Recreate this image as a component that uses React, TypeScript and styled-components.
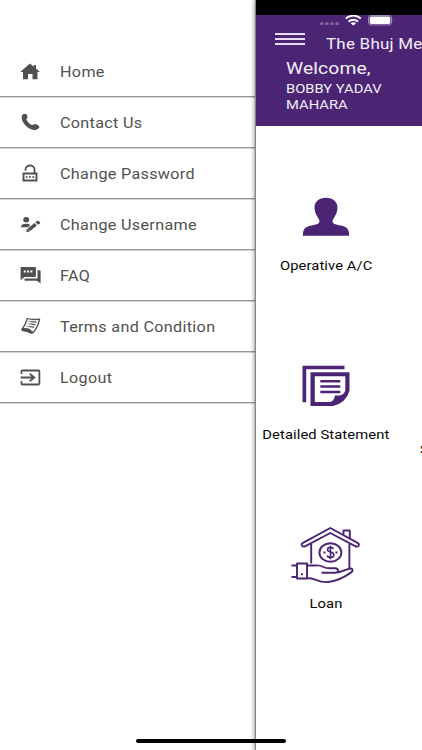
import React from 'react';
import styled, { createGlobalStyle } from 'styled-components';

const PURPLE = '#4b2574';
const GREY = '#505050';

const GlobalStyle = createGlobalStyle`
  * { box-sizing: border-box; }
  body { margin: 0; background: #fff; overflow: hidden; }
`;

const Screen = styled.div`
  position: relative;
  display: flex;
  width: 422px;
  height: 750px;
  overflow: hidden;
  background: #fff;
  font-family: Roboto, "Liberation Sans", sans-serif;
`;

const Drawer = styled.nav`
  flex: none;
  width: 256px;
  padding-top: 46px;
`;

const DrawerRow = styled.div`
  display: flex;
  align-items: center;
  height: 51px;
  padding-left: 18px;
  border-bottom: 1px solid #979797;
  box-shadow: 0 1px 0 #d2d2d2;
  color: ${GREY};
`;

const IconSlot = styled.div`
  display: flex;
  justify-content: center;
  width: 24px;
  margin-right: 17.5px;
  svg { display: block; }
`;

const RowLabel = styled.div`
  padding-top: 2px;
`;

const Wide = styled.span<{ $size: number; $stretch: number; $spacing?: number; $origin?: string }>`
  display: block;
  white-space: nowrap;
  font-size: ${p => p.$size}px;
  letter-spacing: ${p => p.$spacing ?? 0}px;
  transform: scaleX(${p => p.$stretch});
  transform-origin: ${p => p.$origin ?? 'left'} center;
`;

const Main = styled.main`
  flex: none;
  width: 166px;
  height: 750px;
  background: #fff;
  box-shadow: -1px 0 1px #888, -2px 0 4px rgba(0, 0, 0, 0.35);
`;

const Notch = styled.div`
  height: 15px;
  background: #000;
`;

const Header = styled.header`
  height: 111px;
  overflow: hidden;
  background: ${PURPLE};
  color: #f4effa;
`;

const StatusBar = styled.div`
  display: flex;
  height: 12px;
  padding-left: 63px;
`;

const TitleBar = styled.div`
  display: flex;
  height: 31px;
  padding-left: 19px;
`;

const Burger = styled.div`
  flex: none;
  display: flex;
  flex-direction: column;
  justify-content: space-between;
  width: 30px;
  height: 12px;
  margin: 6px 21px 0 0;
`;

const BurgerLine = styled.i`
  height: 2px;
  background: #eadcf6;
`;

const Title = styled.div`
  padding-top: 9px;
  line-height: 18px;
`;

const Greeting = styled.div`
  padding-left: 30px;
  line-height: 16px;
`;

const Welcome = styled.div`
  height: 23px;
  line-height: 22px;
`;

const TileRow = styled.div<{ $top: number }>`
  display: flex;
  height: 98px;
  margin-top: ${p => p.$top}px;
  overflow: hidden;
`;

const Tile = styled.div`
  flex: none;
  display: flex;
  flex-direction: column;
  align-items: center;
  width: 140.5px;
  color: #060606;
`;

const TileIcon = styled.div<{ $height?: number }>`
  height: ${p => p.$height ?? 61}px;
  svg { display: block; }
`;

const NextTile = styled.div`
  flex: none;
  padding: 79px 0 0 23.5px;
  line-height: 12px;
  color: #060606;
`;

const HomeIndicator = styled.div`
  position: absolute;
  left: 136px;
  bottom: 7px;
  width: 150px;
  height: 4px;
  border-radius: 2px;
  background: #000;
`;

const HomeIcon = () => (
  <svg width="20" height="17" viewBox="0 0 20 17" fill="currentColor">
    <path d="M10 .5 13.8 3.7V2H16v3.6L19.8 9h-2.3v7.3h-5V11H8v5.3H3V9H.2Z" />
  </svg>
);

const PhoneIcon = () => (
  <svg width="19" height="18" viewBox="0 0 19 18" fill="currentColor">
    <path d="M.7 3.4C1.2 1.7 2.7.5 4.3.8c1.4.4 2.3 1.8 2.2 3.2 0 1-.9 1.4-1 2 .4 2.5 3.3 5.4 6 6 .8.1 1.2-1 2.3-.9 1.6.1 3.4 1.3 4.5 2.5.3.4.1 1-.3 1.3-2 1.8-4.1 2.6-6.3 1.9C6.1 15.2.1 9 .7 3.4Z" />
  </svg>
);

const LockIcon = () => (
  <svg width="17" height="18" viewBox="0 0 17 18" fill="none" stroke="currentColor">
    <path d="M3.5 6.8V5.500a4.500 4 0 0 1 9 0V9" strokeWidth="1.8" />
    <path d="M1.500 9.500h13v7h-13Z" strokeWidth="1.9" />
    <path d="M3.700 13h8.600" strokeWidth="1.7" strokeDasharray="2 1.3" />
  </svg>
);

const UserEditIcon = () => (
  <svg width="21" height="17" viewBox="0 0 21 17" fill="currentColor">
    <ellipse cx="6.2" cy="3.7" rx="3" ry="2.7" />
    <path d="M.8 11.2C1 8.8 3 7.7 6 7.7c1.800 0 3.300.4 4.300 1.300l-2.200 2.200Z" />
    <path d="m7 13.2 7.400-6.200 2.500 2.500-7.400 6-3.200.8Z" />
    <path d="m15.400 6.200 1.500-1.200q.8-.6 1.500 0l1.600 1.300q.6.600 0 1.200l-1.900 1.300Z" />
    <path d="m8.500 14 1 .8" stroke="#fff" strokeWidth=".9" />
  </svg>
);

const FaqIcon = () => (
  <svg width="21" height="18" viewBox="0 0 21 18">
    <path fill="currentColor" d="M1.300 1h13.800q.8 0 .8.800v8.500q0 .7-.8.700H4.300L.6 14.300V1.700Q.6 1 1.300 1Z" />
    <path fill="currentColor" d="M17.500 4.200H20q.6 0 .6.700v12.600l-3.800-2.700H5.200q-.7 0-.7-.7v-1.600h13Z" />
    <path stroke="#fff" strokeWidth="1.9" strokeDasharray="2 1.3" d="M3.800 5.500h9" />
  </svg>
);

const TermsIcon = () => (
  <svg width="21" height="18" viewBox="0 0 21 18" fill="none" stroke="currentColor">
    <path d="M7.300 1.500q5 1.500 12.200.7-1.100 6.800-5.600 12.600-1.300 1.600-2.500.4-.9-2.400-3-2.700l-6-.8Q5.500 8 7.300 1.500Z" strokeWidth="1.3" />
    <path d="M2.200 11.500q-1.600 1.600.5 2.300 4.600.3 8 2.500 1.700.4 2.800-1.300l-2-.4q-.9-2.200-3-2.600Z" fill="currentColor" strokeWidth=".9" />
    <path d="m10.500 4.600 6 .5M9.500 7l6 .6M8.400 9.500l5.800.7" strokeWidth="1.2" />
    <path d="M8.600 4.400h1M7.700 6.700h1M6.500 9.200h1" strokeWidth="1.1" />
  </svg>
);

const LogoutIcon = () => (
  <svg width="21" height="17" viewBox="0 0 21 17" fill="none" stroke="currentColor" strokeWidth="1.8">
    <path d="M1.500 5V2.300Q1.500 1.500 2.400 1.500h16q1 0 1 .9v12.200q0 .9-1 .9h-16q-.9 0-.9-.8V12" />
    <path d="M.6 8.500h13M9.700 4.800l4.500 3.700-4.500 3.700" />
  </svg>
);

const StatusIcons = () => (
  <svg width="80" height="13" viewBox="0 0 80 13">
    <g fill="#8468a0">
      <rect x="1" y="7.3" width="3.5" height="2.700" rx="1" />
      <rect x="6.200" y="7.300" width="3.500" height="2.700" rx="1" />
      <rect x="11.400" y="7.300" width="3.500" height="2.700" rx="1" />
      <rect x="16.400" y="7.300" width="3.500" height="2.700" rx="1" />
    </g>
    <g fill="none" stroke="#fff" strokeWidth="1.9">
      <path d="M26.800 3.600Q34.300-2.400 41.800 3.600" />
      <path d="M29.500 6.500q4.800-3.700 9.600 0" />
    </g>
    <path fill="#fff" d="M31.500 8.200q2.800-2 5.600 0l-2.800 2.200Z" />
    <rect x="49.500" y=".5" width="23" height="9.400" rx="2.500" fill="none" stroke="#a28cb8" />
    <rect x="50.700" y="1.500" width="20.600" height="7.400" rx="1.700" fill="#fff" />
    <path d="M74 3.800q1.500 1.400 0 2.800Z" fill="#a28cb8" />
  </svg>
);

const PersonIcon = () => (
  <svg width="48" height="40" viewBox="0 0 48 40" fill={PURPLE}>
    <path d="M24 .8c6.800 0 11.500 3.900 11.500 10 0 4.500-2 7.600-4.200 11.300-1.300 2.200-1 4 1.200 4.900 3.300 1.500 8 1.300 11.200 3.200 2.500 1.400 3.500 4.200 3.500 8.500H.8c0-4.300 1-7.100 3.500-8.500C7.500 28.300 12.200 28.500 15.500 27c2.200-.9 2.500-2.700 1.200-4.900-2.200-3.700-4.200-6.800-4.200-11.300C12.500 4.700 17.200.8 24 .8Z" />
  </svg>
);

const StatementIcon = () => (
  <svg width="48" height="42" viewBox="0 0 48 42" fill={PURPLE}>
    <path d="M.5.7h42v3.600H4.200v33H.5Z" />
    <path fillRule="evenodd" d="M8.500 7.300h39v18.400Q44 38 31 41H8.500ZM12.800 11.300v25.800h15.500q4-1.400 4.500-6.600h4.500q4.500-.5 6-5V11.300Z" />
    <path d="M18.300 15h20v2.500h-20ZM18.300 20.300h20v2.500h-20ZM18.300 25.800h20v2.500h-20Z" />
  </svg>
);

const LoanIcon = () => (
  <svg width="70" height="58" viewBox="0 0 70 58" fill="none" stroke={PURPLE} strokeWidth="1.9" strokeLinejoin="round">
    <path d="M39.300 2 12 16.800q-2.200 1.600-.9 3.100 1.300 1.200 3.300.2L39.300 7l24.900 13.100q2 1 3.300-.2 1.300-1.500-.9-3.100Z" />
    <path d="M52.500 8.500v-4h6.300v7.800M20.200 18v19.500M58.400 18v25" />
    <ellipse cx="39.400" cy="26.500" rx="11" ry="9.300" />
    <path d="M42.500 23q-.7-1.600-3-1.600-3 0-3 2.200 0 1.900 3 2.500 3.300.6 3.300 2.900 0 2.400-3.300 2.400-2.700 0-3.300-2M39.500 19.700v13.600" strokeWidth="1.6" />
    <path d="M32.500 26.500h2M44.500 26.500h2" />
    <path d="M.5 39.500h5M.5 51h5M6 37.500h10v15H6ZM16 39.500h8q5-.5 8.500 1.500 2.500 1.300 6 1.300h5.500q3 .2 3 2.200 0 2.300-3 2.300H30.500M47 46.500l11.500-3.800q2.600-.6 3 1 .4 1.800-2 3.200Q48 55 37 56q-6 .5-12-2.200-4.500-1.800-9-1.800" />
    <path d="M10 48.200h2" />
  </svg>
);

const items = [
  { label: 'Home', Icon: HomeIcon },
  { label: 'Contact Us', Icon: PhoneIcon },
  { label: 'Change Password', Icon: LockIcon },
  { label: 'Change Username', Icon: UserEditIcon },
  { label: 'FAQ', Icon: FaqIcon },
  { label: 'Terms and Condition', Icon: TermsIcon },
  { label: 'Logout', Icon: LogoutIcon },
];

export default function App() {
  return (
    <>
      <GlobalStyle />
      <Screen>
        <Drawer>
          {items.map(({ label, Icon }) => (
            <DrawerRow key={label}>
              <IconSlot><Icon /></IconSlot>
              <RowLabel><Wide $size={13.8} $stretch={1.17} $spacing={0.28}>{label}</Wide></RowLabel>
            </DrawerRow>
          ))}
        </Drawer>
        <Main>
          <Notch />
          <Header>
            <StatusBar><StatusIcons /></StatusBar>
            <TitleBar>
              <Burger><BurgerLine /><BurgerLine /><BurgerLine /></Burger>
              <Title><Wide $size={14.5} $stretch={1.17} $spacing={0.2}>The Bhuj Me</Wide></Title>
            </TitleBar>
            <Greeting>
              <Welcome><Wide $size={16.5} $stretch={1.17} $spacing={0.1}>Welcome,</Wide></Welcome>
              <Wide $size={12.5} $stretch={1.18}>BOBBY YADAV</Wide>
              <Wide $size={12.5} $stretch={1.18}>MAHARA</Wide>
            </Greeting>
          </Header>
          <TileRow $top={71}>
            <Tile>
              <TileIcon><PersonIcon /></TileIcon>
              <Wide $size={12.5} $stretch={1.18} $spacing={0.08} $origin="center">Operative A/C</Wide>
            </Tile>
          </TileRow>
          <TileRow $top={70}>
            <Tile>
              <TileIcon $height={62}><StatementIcon /></TileIcon>
              <Wide $size={12.5} $stretch={1.18} $spacing={0.08} $origin="center">Detailed Statement</Wide>
            </Tile>
            <NextTile><Wide $size={12.5} $stretch={1.18}>Statement</Wide></NextTile>
          </TileRow>
          <TileRow $top={63}>
            <Tile>
              <TileIcon $height={70}><LoanIcon /></TileIcon>
              <Wide $size={12.5} $stretch={1.18} $spacing={0.08} $origin="center">Loan</Wide>
            </Tile>
          </TileRow>
        </Main>
        <HomeIndicator />
      </Screen>
    </>
  );
}
